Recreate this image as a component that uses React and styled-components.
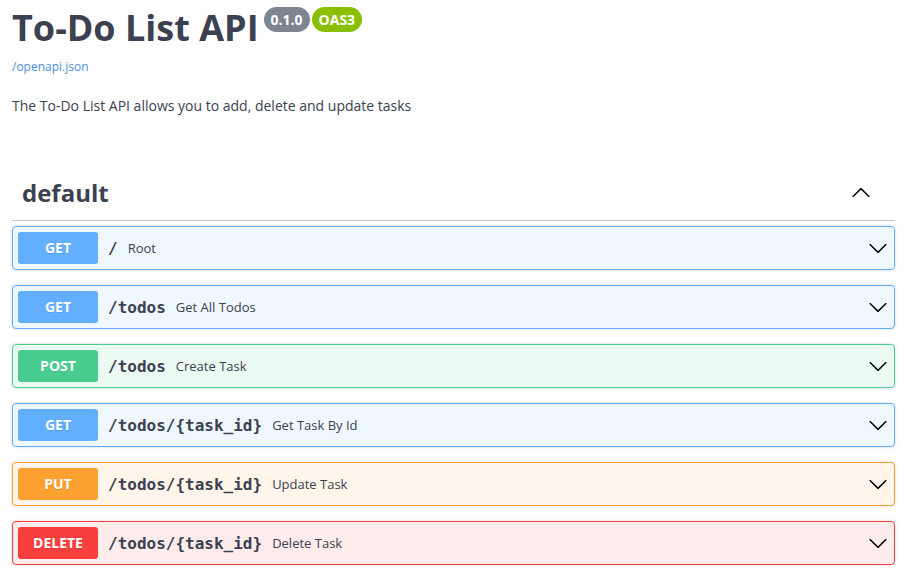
import React from "react";
import styled, { createGlobalStyle } from "styled-components";

const Global = createGlobalStyle`
  html, body { margin: 0; padding: 0; background: #fff; }
  body { font-family: "Open Sans", "Noto Sans", sans-serif; color: #3b4151; }
`;

const Wrapper = styled.div`
  padding: 0 12px;
  box-sizing: border-box;
  width: 100%;
`;

const Info = styled.div`
  padding-top: 6px;
`;

const Title = styled.h2`
  margin: 0;
  font-size: 36px;
  line-height: 44px;
  font-weight: 700;
  color: #3b4151;
  display: flex;
  align-items: flex-start;
`;

const Badges = styled.span`
  display: inline-flex;
  gap: 2px;
  margin-left: 5px;
  margin-top: 1px;
`;

const Badge = styled.span`
  display: inline-block;
  background: ${(p) => p.$bg};
  color: #fff;
  border-radius: 57px;
  font-size: 14px;
  font-weight: 700;
  line-height: 21px;
  padding: 2px 7px;
`;

const Link = styled.a`
  display: block;
  margin-top: 9px;
  font-size: 12px;
  line-height: 16px;
  color: #4990e2;
  text-decoration: none;
`;

const Description = styled.p`
  margin: 21px 0 0;
  font-size: 14px;
  line-height: 20px;
  color: #3b4151;
`;

const TagSection = styled.div`
  margin-top: 50px;
`;

const TagHeader = styled.h3`
  margin: 0 0 5px;
  display: flex;
  align-items: center;
  padding: 10px 24px 10px 10px;
  border-bottom: 1px solid rgba(59, 65, 81, 0.3);
  font-size: 24px;
  line-height: 34px;
  font-weight: 700;
  color: #3b4151;
`;

const TagName = styled.span`
  flex: 1;
`;

const Arrow = styled.svg`
  width: 20px;
  height: 20px;
  flex: none;
  fill: #000;
  margin-right: ${(p) => p.$mr || 0}px;
  transform: ${(p) => (p.$up ? "rotate(180deg)" : "none")};
`;

const methods = {
  GET: { c: "#61affe", bg: "rgba(97,175,254,.1)" },
  POST: { c: "#49cc90", bg: "rgba(73,204,144,.1)" },
  PUT: { c: "#fca130", bg: "rgba(252,161,48,.1)" },
  DELETE: { c: "#f93e3e", bg: "rgba(249,62,62,.1)" },
};

const Opblock = styled.div`
  margin: 0 0 15px;
  border: 1px solid ${(p) => methods[p.$m].c};
  background: ${(p) => methods[p.$m].bg};
  border-radius: 4px;
  box-shadow: 0 0 3px rgba(0, 0, 0, 0.19);
`;

const Summary = styled.div`
  display: flex;
  align-items: center;
  padding: 5px;
`;

const Method = styled.span`
  min-width: 80px;
  padding: 6px 0;
  text-align: center;
  border-radius: 3px;
  background: ${(p) => methods[p.$m].c};
  color: #fff;
  font-size: 14px;
  line-height: 20px;
  font-weight: 700;
  text-shadow: 0 1px 0 rgba(0, 0, 0, 0.1);
`;

const Path = styled.span`
  padding: 0 10px;
  font-family: "DejaVu Sans Mono", monospace;
  font-size: 16px;
  font-weight: 700;
  color: #3b4151;
`;

const Desc = styled.span`
  flex: 1;
  font-size: 13px;
  color: #3b4151;
`;

const ArrowIcon = ({ up, mr }) => (
  <Arrow viewBox="0 0 20 20" $mr={mr} $up={up}>
    <path d="M17.418 6.109c.272-.268.709-.268.979 0s.271.701 0 .969l-7.908 7.83c-.27.268-.707.268-.979 0l-7.908-7.830c-.27-.268-.27-.701 0-.969.271-.268.709-.268.979 0L10 13.25l7.418-7.141z" />
  </Arrow>
);

const ops = [
  { m: "GET", p: "/", d: "Root" },
  { m: "GET", p: "/todos", d: "Get All Todos" },
  { m: "POST", p: "/todos", d: "Create Task" },
  { m: "GET", p: "/todos/{task_id}", d: "Get Task By Id" },
  { m: "PUT", p: "/todos/{task_id}", d: "Update Task" },
  { m: "DELETE", p: "/todos/{task_id}", d: "Delete Task" },
];

export default function App() {
  return (
    <Wrapper>
      <Global />
      <Info>
        <Title>
          To-Do List API
          <Badges>
            <Badge $bg="#7d8492">0.1.0</Badge>
            <Badge $bg="#89bf04">OAS3</Badge>
          </Badges>
        </Title>
        <Link href="#">/openapi.json</Link>
        <Description>The To-Do List API allows you to add, delete and update tasks</Description>
      </Info>
      <TagSection>
        <TagHeader>
          <TagName>default</TagName>
          <ArrowIcon up />
        </TagHeader>
        {ops.map((o, i) => (
          <Opblock key={i} $m={o.m}>
            <Summary>
              <Method $m={o.m}>{o.m}</Method>
              <Path>{o.p}</Path>
              <Desc>{o.d}</Desc>
              <ArrowIcon mr={1} />
            </Summary>
          </Opblock>
        ))}
      </TagSection>
    </Wrapper>
  );
}
